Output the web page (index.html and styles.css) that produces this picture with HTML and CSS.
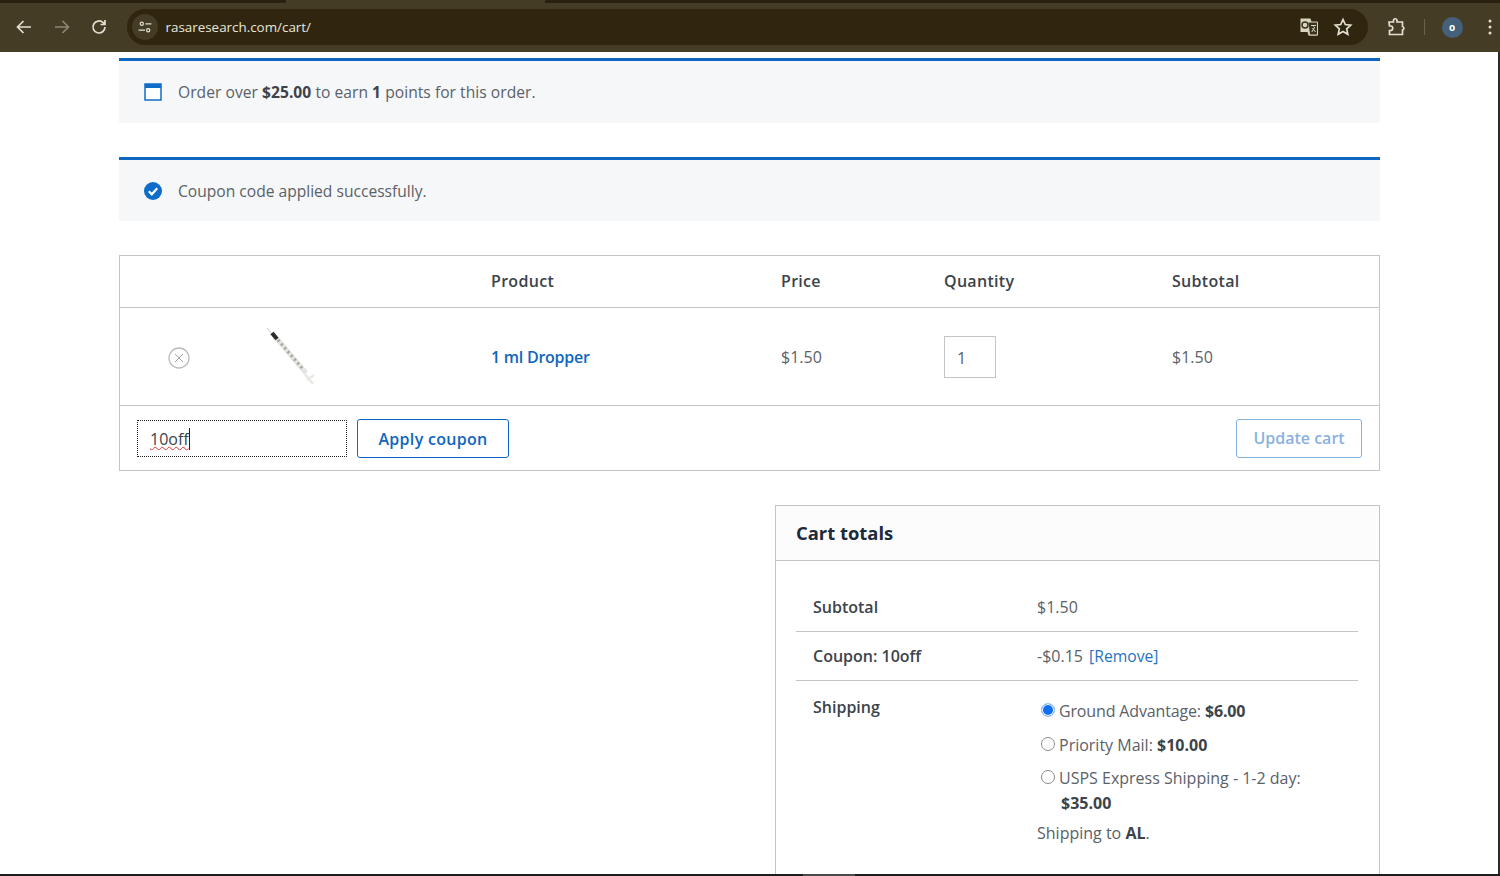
FILE: index.html
```html
<!DOCTYPE html>
<html lang="en">
<head>
<meta charset="utf-8">
<title>Cart</title>
<link rel="stylesheet" href="styles.css">
</head>
<body>
<header class="chrome">
  <div class="tabstrip"></div>
  <div class="toolbar">
    <svg class="tb-icon" viewBox="0 0 20 20"><path d="M17 10H4M9.500 4L3.500 10l6 6" class="st"/></svg>
    <svg class="tb-icon dim" viewBox="0 0 20 20"><path d="M3 10h13M10.500 4l6 6-6 6" class="st"/></svg>
    <svg class="tb-icon" viewBox="0 0 20 20"><path d="M16 10a6 6 0 1 1-1.800-4.300L16 7.500M16 3v4.500h-4.500" class="st"/></svg>
    <div class="omnibox">
      <span class="site-btn"><svg viewBox="0 0 20 20"><circle cx="6" cy="6" r="2" class="st thin"/><path d="M10.500 6H18M2 14h8" class="st thin"/><circle cx="14" cy="14" r="2" class="st thin"/></svg></span>
      <span class="url">rasaresearch.com/cart/</span>
      <svg class="om-icon translate" viewBox="0 0 20 20"><path d="M1.500 1.500h10l1 3.500h6v13.500h-9l-1-3.500h-7z" fill="#d9d4c0"/><path d="M9 5h9.500v13h-8z" fill="#3a3220" stroke="#d9d4c0"/><circle cx="6" cy="8" r="3" fill="none" stroke="#3a3220" stroke-width="1.500"/><path d="M12 8.500h5M14.500 8v1.500M12.800 15l3-5M13.500 11l3 4" stroke="#d9d4c0" fill="none"/></svg>
      <svg class="om-icon star" viewBox="0 0 20 20"><path d="M10 2.500l2.300 5 5.400.6-4 3.700 1.100 5.400-4.800-2.800-4.800 2.800 1.100-5.400-4-3.700 5.400-.6z" class="st"/></svg>
    </div>
    <svg class="tb-icon ext" viewBox="0 0 20 20"><path d="M3 5h4.500V3.500a1.700 1.700 0 0 1 3.500 0V5h5.500v4.500a1.800 1.800 0 0 1 0 3.500v4.500H3.500v-4h1a2 2 0 0 0 0-4.500h-1z" class="st"/></svg>
    <span class="sep"></span>
    <span class="avatar">o</span>
    <svg class="menu" viewBox="0 0 4 18"><circle cx="2" cy="3" r="1.500"/><circle cx="2" cy="9" r="1.500"/><circle cx="2" cy="15" r="1.500"/></svg>
  </div>
</header>

<main class="page">
  <div class="notice first">
    <svg class="n-icon" viewBox="0 0 18 18"><rect x="1" y="1" width="16" height="16" fill="#fff" stroke="#0f6cc9" stroke-width="1.500"/><rect x="1" y="1" width="16" height="4" fill="#0f6cc9"/></svg>
    <p>Order over <b>$25.00</b> to earn <b>1</b> points for this order.</p>
  </div>
  <div class="notice">
    <svg class="n-icon" viewBox="0 0 18 18"><circle cx="9" cy="9" r="9" fill="#0f6cc9"/><path d="M4.800 9.300l3 3 5.400-6" fill="none" stroke="#fff" stroke-width="2.200"/></svg>
    <p>Coupon code applied successfully.</p>
  </div>

  <section class="cart">
    <div class="row head">
      <span class="c-product">Product</span>
      <span class="c-price">Price</span>
      <span class="c-qty">Quantity</span>
      <span class="c-sub">Subtotal</span>
    </div>
    <div class="row item">
      <span class="c-remove"><svg viewBox="0 0 22 22"><circle cx="11" cy="11" r="10" fill="none" stroke="#bcbcbc" stroke-width="1.300"/><path d="M7 7l8 8M15 7l-8 8" stroke="#a4a4a4" stroke-width="1"/></svg></span>
      <span class="c-thumb"><svg viewBox="0 0 52 60"><path d="M1 1l6 7" stroke="#ccc" stroke-width="1"/><path d="M6 6l34 40" stroke="#e4e4e0" stroke-width="5"/><path d="M6 6l5 6" stroke="#2c2c2c" stroke-width="4"/><path d="M12 13l24 28" stroke="#a5a59c" stroke-width="3" stroke-dasharray="2 3"/><path d="M38 46l9 11M41 53l7-5" stroke="#e8e8e4" stroke-width="2.500"/></svg></span>
      <a class="c-product name" href="#">1 ml Dropper</a>
      <span class="c-price">$1.50</span>
      <span class="c-qty"><span class="qty">1</span></span>
      <span class="c-sub">$1.50</span>
    </div>
    <div class="row actions">
      <div class="coupon"><span class="typed">10off</span></div>
      <a class="btn" href="#">Apply coupon</a>
      <a class="btn update" href="#">Update cart</a>
    </div>
  </section>

  <section class="totals">
    <h2>Cart totals</h2>
    <div class="t-body">
      <div class="t-row"><span class="t-label">Subtotal</span><span class="t-val">$1.50</span></div>
      <div class="t-row"><span class="t-label">Coupon: 10off</span><span class="t-val">-$0.15 <a href="#">[Remove]</a></span></div>
      <div class="t-row ship">
        <span class="t-label">Shipping</span>
        <div class="t-val stack">
          <label class="opt"><span class="radio on"></span><span class="tight">Ground Advantage: <b>$6.00</b></span></label>
          <label class="opt"><span class="radio"></span><span>Priority Mail: <b>$10.00</b></span></label>
          <label class="opt wrap"><span class="radio"></span><span>USPS Express Shipping - 1-2 day:<br><b class="price2">$35.00</b></span></label>
          <p class="to">Shipping to <b>AL</b>.</p>
        </div>
      </div>
    </div>
  </section>
</main>
<div class="edge-right"></div>
<div class="edge-bottom"><span class="edge-thumb"></span></div>
</body>
</html>
```

FILE: styles.css
```css
* { box-sizing: border-box; }
html, body { margin: 0; height: 876px; overflow: hidden; background: #fff; }
body { font-family: "Open Sans", "Noto Sans", sans-serif; font-size: 16px; color: #5a6168; position: relative; }
p { margin: 0; }

.chrome { height: 52px; background: #453c25; display: flex; flex-direction: column; }
.tabstrip { height: 3px; background: linear-gradient(to right, #292213 286px, #453c25 286px, #453c25 545px, #292213 545px); flex: none; }
.toolbar { flex: 1; display: flex; align-items: center; padding-left: 14px; padding-bottom: 1px; }
.st { fill: none; stroke: #e2dfd2; stroke-width: 1.700; }
.st.thin { stroke-width: 1.500; }
.tb-icon { width: 20px; height: 20px; margin-right: 17.500px; flex: none; }
.tb-icon.dim { opacity: .45; }
.omnibox { width: 1241px; height: 36px; border-radius: 18px; background: #30260f; display: flex; align-items: center; padding-left: 5px; flex: none; }
.site-btn { width: 26px; height: 26px; border-radius: 50%; background: #453c25; display: flex; align-items: center; justify-content: center; flex: none; }
.site-btn svg { width: 16px; height: 16px; }
.url { margin-left: 8px; font-size: 13.400px; color: #e8e6dc; flex: 1; }
.om-icon { width: 20px; height: 20px; flex: none; }
.translate { margin-right: 14px; }
.star { margin-right: 15px; }
.tb-icon.ext { margin: 0 0 0 18px; }
.sep { width: 1px; height: 16px; background: #6a6148; margin: 0 17px 0 18px; flex: none; }
.avatar { width: 21px; height: 21px; border-radius: 50%; background: #45607a; color: #fff; font-size: 10px; line-height: 20px; text-align: center; font-weight: 700; flex: none; }
.menu { width: 4px; height: 18px; margin-left: 25px; fill: #e2dfd2; flex: none; }

.page { padding: 0 120px 0 119px; }
.notice { height: 65px; background: #f6f7f8; border-top: 3px solid #0f66c0; display: flex; align-items: center; padding: 0 0 0 25px; font-size: 15.600px; }
.notice + .notice { height: 64px; margin-top: 34px; }
.notice.first { margin-top: 6px; letter-spacing: .04px; }
.n-icon { width: 18px; height: 18px; margin-right: 16px; flex: none; }

.cart { margin-top: 34px; border: 1px solid #c3c4c7; height: 216px; }
.row { display: flex; align-items: center; }
.head { height: 52px; padding-bottom: 2px; font-weight: 600; color: #3c434a; border-bottom: 1px solid #c3c4c7; letter-spacing: .3px; }
.item { height: 98px; border-bottom: 1px solid #c3c4c7; }
.c-remove { width: 118px; padding: 2px 0 0 48px; display: flex; flex: none; }
.c-remove svg { width: 22px; height: 22px; }
.c-thumb { width: 253px; flex: none; display: flex; padding-left: 28px; }
.c-thumb svg { width: 52px; height: 60px; }
.head .c-product { margin-left: 371px; }
.c-product { width: 290px; flex: none; }
.c-price { width: 163px; flex: none; }
.c-qty { width: 228px; flex: none; }
.c-sub { flex: none; }
.name { color: #0f66c0; font-weight: 600; text-decoration: none; letter-spacing: -.25px; }
.qty { display: block; width: 52px; height: 42px; border: 1px solid #c3c4c7; line-height: 43px; padding-left: 12px; }
.actions { height: 64px; padding: 0 17px; }
.coupon { width: 210px; height: 37px; border: 1px dotted #222; padding-left: 12px; line-height: 36px; color: #3c434a; }
.typed { border-right: 1px solid #222; text-decoration: underline wavy #d33; text-decoration-thickness: 1px; }
.btn { margin-left: 10px; height: 39px; line-height: 39px; border: 1px solid #0f66c0; border-radius: 3px; color: #0f66c0; font-weight: 600; text-decoration: none; width: 152px; text-align: center; letter-spacing: .3px; }
.update { margin-left: auto; width: 126px; opacity: .5; letter-spacing: 0; line-height: 37px; }

.totals { margin: 34px 0 0 656px; border: 1px solid #c3c4c7; height: 400px; }
h2 { margin: 0; height: 55px; line-height: 54px; padding-left: 20px; font-size: 18.400px; font-weight: 700; color: #1d2a3a; background: #fcfcfc; border-bottom: 1px solid #c3c4c7; }
.t-body { padding: 21px 21px 0 20px; }
.t-row { display: flex; border-bottom: 1px solid #c3c4c7; height: 49px; align-items: center; padding-left: 17px; }
.t-row:first-child { height: 50px; }
.t-row.ship { border-bottom: 0; align-items: flex-start; height: auto; padding-top: 15px; }
.t-label { width: 224px; flex: none; font-weight: 600; color: #3c434a; }
.stack { margin-top: -2px; }
.t-val a { color: #1f73c4; text-decoration: none; margin-left: 2px; font-size: 15.700px; }
.t-val b, .notice b { color: #3c434a; font-weight: 700; }
.opt { display: flex; align-items: center; height: 34px; white-space: nowrap; padding-left: 4px; }
.opt.wrap { align-items: flex-start; height: auto; line-height: 25px; padding-top: 4px; }
.tight { letter-spacing: -.15px; }
.radio { width: 14px; height: 14px; border: 1px solid #8a8a8a; border-radius: 50%; margin: -2px 4px 0 0; flex: none; background: #fff; }
.radio.on { border: 1px solid #9fc2f5; box-shadow: inset 0 0 0 1px #fff; background: #0f6ff0; }
.wrap .radio { margin-top: 4px; }
.price2 { margin-left: 2px; }
.to { margin-top: 6px; }

.edge-right { position: absolute; top: 52px; right: 0; width: 2px; bottom: 0; background: #2a2a2a; }
.edge-bottom { position: absolute; left: 0; right: 0; bottom: 0; height: 2px; background: #1c1c1c; }
.edge-thumb { position: absolute; left: 803px; width: 52px; top: 0; bottom: 0; background: #4a4a4a; }
```
